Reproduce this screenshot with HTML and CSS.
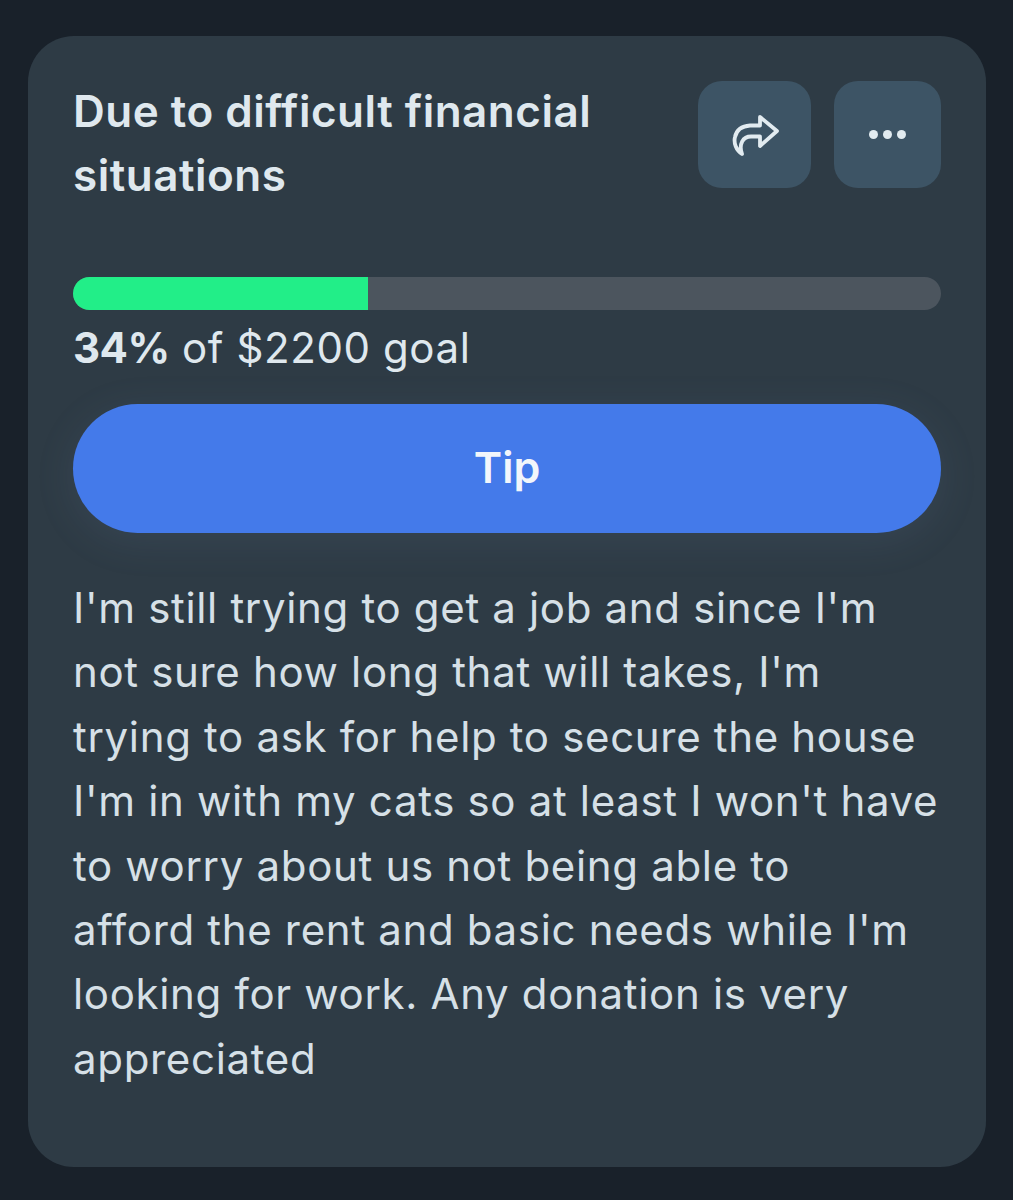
FILE: index.html
```html
<!DOCTYPE html>
<html lang="en">
<head>
    <meta charset="UTF-8">
    <meta name="viewport" content="width=device-width, initial-scale=1.0">
    <title>Due to difficult financial situations</title>
    <link rel="stylesheet" href="styles.css">
</head>
<body>
    <div class="card">
        <div class="card-head">
            <h1 class="title">Due to difficult financial situations</h1>
            <div class="actions">
                <button class="icon-btn share-btn" aria-label="Share">
                    <svg width="50" height="50" viewBox="0 0 50 50" fill="none" stroke="#e2ebf0" stroke-width="3.8" stroke-linecap="round" stroke-linejoin="round">
                        <path d="M12 44 C6 40 3.500 33 5 27 C6.500 20 12 16 20 15.500 L30 15.500 L30 7 L47 21 L30 36 L30 26.500 L21 26.500 C13 26.500 8.500 34 12 44 Z"/>
                    </svg>
                </button>
                <button class="icon-btn more-btn" aria-label="More">
                    <span class="dot"></span><span class="dot"></span><span class="dot"></span>
                </button>
            </div>
        </div>
        <div class="progress"><div class="progress-fill" style="width: 34%"></div></div>
        <p class="goal"><b>34%</b> of $2200 goal</p>
        <button class="tip-btn">Tip</button>
        <p class="story">I'm still trying to get a job and since I'm<br>not sure how long that will takes, I'm<br>trying to ask for help to secure the house<br>I'm in with my cats so at least I won't have<br>to worry about us not being able to<br>afford the rent and basic needs while I'm<br>looking for work. Any donation is very<br>appreciated</p>
    </div>
</body>
</html>
```

FILE: styles.css
```css
body {
    margin: 0;
    height: 1200px;
    overflow: hidden;
    background: #19212a;
    font-family: "Inter", "Noto Sans", sans-serif;
    color: #dfe8ee;
}

.card {
    box-sizing: border-box;
    width: 958px;
    height: 1131px;
    margin: 36px 0 0 28px;
    padding: 45px 45px 0 45px;
    background: #2e3b45;
    border-radius: 46px;
}

.card-head {
    display: flex;
    justify-content: space-between;
    align-items: flex-start;
    height: 196px;
}

.title {
    margin: -2px 0 0;
    width: 570px;
    font-size: 44px;
    font-weight: 600;
    line-height: 64px;
    letter-spacing: 0.5px;
}

.actions {
    display: flex;
    gap: 23px;
}

.icon-btn {
    display: flex;
    align-items: center;
    justify-content: center;
    height: 107px;
    padding: 0;
    border: none;
    border-radius: 24px;
    background: #3d5465;
}

.share-btn {
    width: 113px;
}

.more-btn {
    width: 107px;
    gap: 5px;
}

.dot {
    width: 9px;
    height: 9px;
    border-radius: 50%;
    background: #e2ebf0;
}

.progress {
    height: 33px;
    border-radius: 17px;
    background: #4c555e;
    overflow: hidden;
}

.progress-fill {
    height: 100%;
    background: #22ee88;
}

.goal {
    margin: 6px 0 0;
    font-size: 42px;
    line-height: 64px;
    letter-spacing: 0.6px;
}

.goal b {
    font-weight: 700;
    letter-spacing: -0.5px;
}

.tip-btn {
    display: block;
    width: 100%;
    height: 129px;
    margin-top: 24px;
    padding: 0 0 4px;
    border: none;
    border-radius: 65px;
    background: #447aea;
    color: #f2f6fb;
    font-family: inherit;
    font-size: 43px;
    font-weight: 600;
    box-shadow: 0 8px 40px rgba(120, 150, 190, 0.12);
}

.story {
    margin: 43px 0 0;
    font-size: 42px;
    line-height: 64.4px;
    letter-spacing: 0.67px;
    color: #d6e0e7;
}
```
